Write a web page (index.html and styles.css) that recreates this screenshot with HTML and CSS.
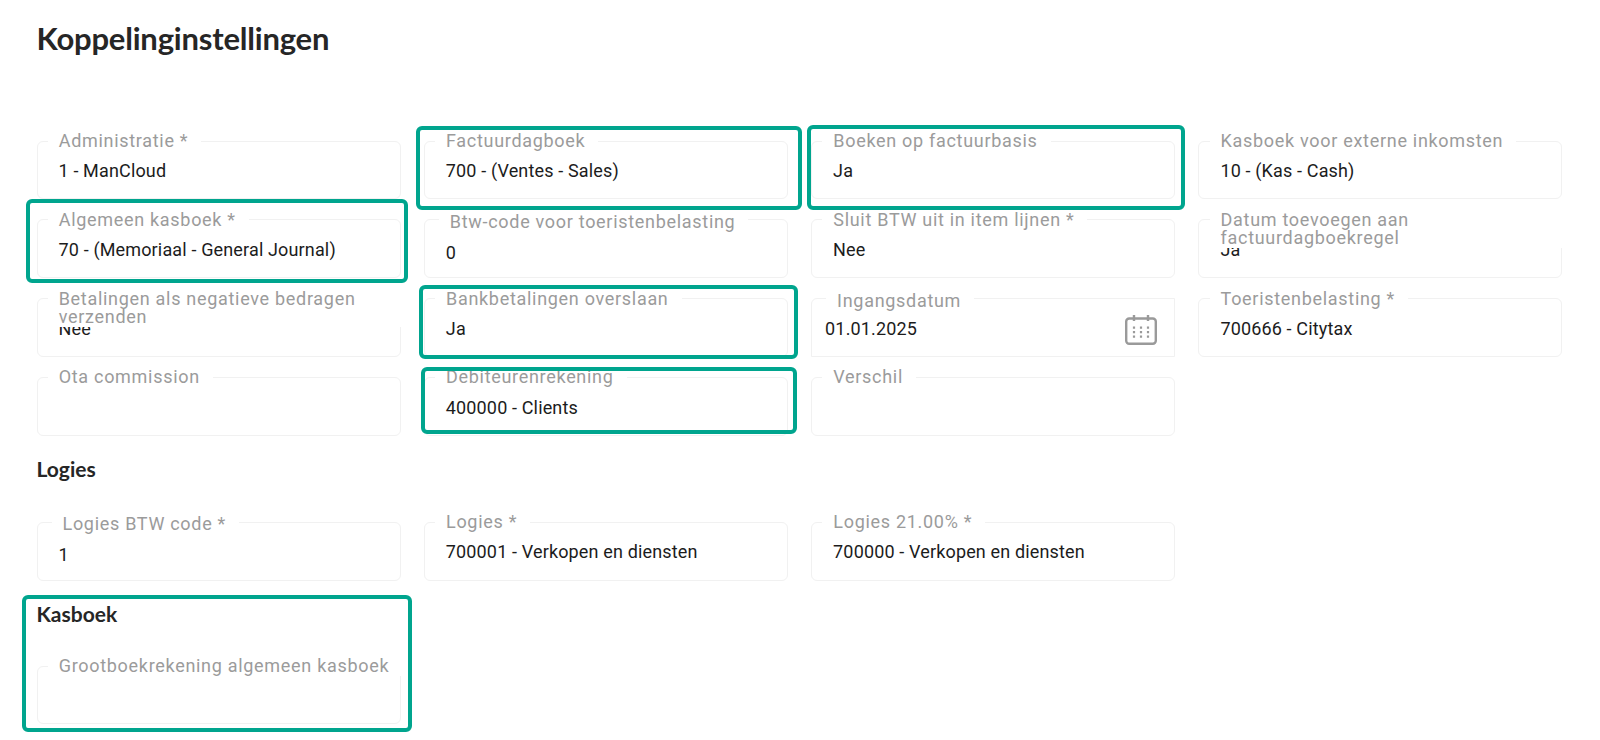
FILE: index.html
```html
<!doctype html>
<html lang="nl">
<head>
<meta charset="utf-8">
<title>Koppelinginstellingen</title>
<link rel="stylesheet" href="styles.css">
</head>

<body>

<main class="page">
  <h1>Koppelinginstellingen</h1>

  <!-- algemene velden -->
  <section class="grid grid-main">
    <div class="field">
      <span class="label">Administratie *</span>
      <span class="value">1 - ManCloud</span>
    </div>
    <div class="field">
      <span class="label">Factuurdagboek</span>
      <span class="value">700 - (Ventes - Sales)</span>
      <i class="mark mark-factuur"></i>
    </div>
    <div class="field">
      <span class="label">Boeken op factuurbasis</span>
      <span class="value">Ja</span>
      <i class="mark mark-boeken"></i>
    </div>
    <div class="field">
      <span class="label">Kasboek voor externe inkomsten</span>
      <span class="value">10 - (Kas - Cash)</span>
    </div>

    <div class="field">
      <span class="label">Algemeen kasboek *</span>
      <span class="value">70 - (Memoriaal - General Journal)</span>
      <i class="mark mark-algemeen"></i>
    </div>
    <div class="field">
      <span class="label label-low">Btw-code voor toeristenbelasting</span>
      <span class="value value-low">0</span>
    </div>
    <div class="field">
      <span class="label">Sluit BTW uit in item lijnen *</span>
      <span class="value">Nee</span>
    </div>
    <div class="field">
      <span class="value">Ja</span>
      <span class="label label-wrap">Datum toevoegen aan factuurdagboekregel</span>
    </div>

    <div class="field">
      <span class="value">Nee</span>
      <span class="label label-wrap">Betalingen als negatieve bedragen verzenden</span>
    </div>
    <div class="field">
      <span class="label">Bankbetalingen overslaan</span>
      <span class="value">Ja</span>
      <i class="mark mark-bank"></i>
    </div>
    <div class="field field-date">
      <span class="label label-low">Ingangsdatum</span>
      <span class="value">01.01.2025</span>
      <svg class="cal" width="32" height="30" viewBox="0 0 32 30" fill="none" stroke="#9a9a9a" stroke-width="2.4">
        <rect x="1.200" y="3.500" width="29.600" height="25.300" rx="3"/>
        <path d="M9 0v6M23 0v6"/>
        <path d="M9 11.500v11.500M16 11.500v11.500M23 11.500v11.500" stroke-width="2.200" stroke-dasharray="2.200 2.300"/>
      </svg>
    </div>
    <div class="field">
      <span class="label">Toeristenbelasting *</span>
      <span class="value">700666 - Citytax</span>
    </div>

    <div class="field">
      <span class="label">Ota commission</span>
    </div>
    <div class="field">
      <span class="label">Debiteurenrekening</span>
      <span class="value">400000 - Clients</span>
      <i class="mark mark-debiteuren"></i>
    </div>
    <div class="field">
      <span class="label">Verschil</span>
    </div>
  </section>

  <h2 class="head-logies">Logies</h2>
  <section class="grid">
    <div class="field">
      <span class="label label-low">Logies BTW code *</span>
      <span class="value value-low">1</span>
    </div>
    <div class="field">
      <span class="label">Logies *</span>
      <span class="value">700001 - Verkopen en diensten</span>
    </div>
    <div class="field">
      <span class="label">Logies 21.00% *</span>
      <span class="value">700000 - Verkopen en diensten</span>
    </div>
  </section>

  <!-- kasboek blok -->
  <section class="kasboek">
    <h2>Kasboek</h2>
    <div class="grid">
      <div class="field">
        <span class="label label-long">Grootboekrekening algemeen kasboek</span>
      </div>
    </div>
    <i class="mark mark-kasboek"></i>
  </section>
</main>

</body>
</html>
```

FILE: styles.css
```css
:root{
  --txt:    #1b1b1b;
  --muted:  #9b9b9b;
  --line:   #f1f1f1;
  --accent: #00a58e;
}

* {
  box-sizing: border-box;
  margin: 0;
  padding: 0;
}
body {
  font-family: 'Roboto', sans-serif;
  background: #fff;
  color: var(--txt);
}

.page {
  min-height: 100vh;
  padding: 20px 36.5px 0;
}

h1, h2 {
  font-family: 'Lato', sans-serif;
  color: #262626;
}
h1 {
  font-size: 31px;
  line-height: 36px;
  font-weight: 700;
  letter-spacing: -.2px;
}
h2 {
  font-size: 21px;
  line-height: 24px;
  font-weight: 700;
}

/* ── form grid ─────────────────────────────────────────────────── */
.grid {
  display: grid;
  grid-template-columns: repeat(4, 364px);
  column-gap: 23.3px;
  row-gap: 20.2px;
}
.grid-main {
  margin-top: 84.5px;
}
.head-logies {
  margin-top: 21px;
  margin-bottom: 41px;
}

.field {
  position: relative;
  height: 58.7px;
  border: 1.5px solid var(--line);
  border-radius: 6px;
  padding: 17.4px 21px 0;
}
.value {
  display: block;
  font-size: 18px;
  line-height: 24px;
  letter-spacing: .15px;
  color: #1c1c1c;
}
.value-low {
  margin-top: 3px;
}

/* label sits in a notch on the top border */
.label {
  position: absolute;
  left: 10.2px;
  top: -9.7px;
  padding: 0 13px 0 11px;
  background: #fff;
  font-size: 18px;
  line-height: 18.5px;
  letter-spacing: .7px;
  color: var(--muted);
}
.label-low {
  top: -7.5px;
  left: 14px;
}
.label-wrap {
  width: 356px;
}
.label-long {
  white-space: nowrap;
}

.field-date {
  padding-left: 13px;
  border-radius: 6px 0 0 0;
}
.cal {
  position: absolute;
  right: 17px;
  top: 15.5px;
}

/* ── kasboek ───────────────────────────────────────────────────── */
.kasboek {
  position: relative;
  margin-top: 21.3px;
}
.kasboek h2 {
  margin-bottom: 40px;
}

/* ── teal annotation frames ────────────────────────────────────── */
.mark {
  position: absolute;
  border: 4px solid var(--accent);
  border-radius: 6px;
  pointer-events: none;
}
.mark-factuur    { inset: -15.3px -15.4px -12.3px -9.3px; }
.mark-boeken     { inset: -16.3px -10.9px -11.6px -5px; }
.mark-algemeen   { inset: -21.6px -8px -5.7px -12px; }
.mark-bank       { inset: -14px -11.2px -3px -6.3px; }
.mark-debiteuren { inset: -11px -10.2px 1px -4.3px; }
.mark-kasboek    { inset: -6.7px auto -8px -14.8px; width: 390.6px; }
```
